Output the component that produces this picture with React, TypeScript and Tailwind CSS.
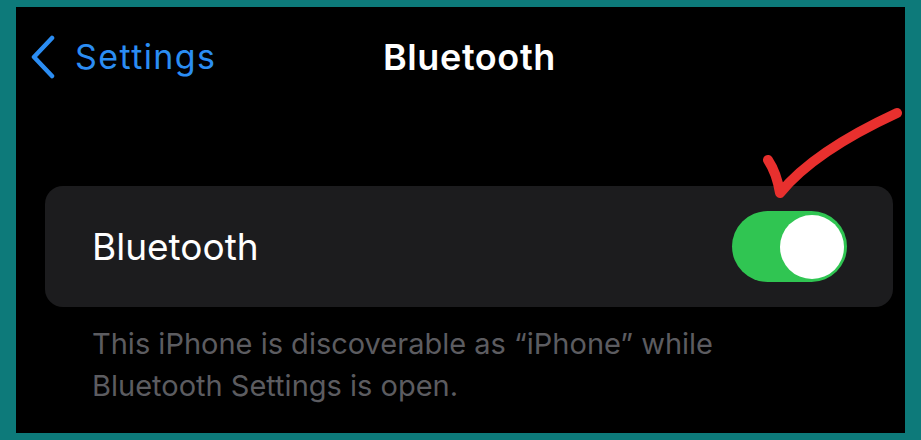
export default function App() {
  return (
    <div className="w-[921px] h-[440px] bg-[#0d7a7a] px-[16px] py-[7px] [font-family:Inter,'Liberation_Sans',sans-serif]">
      <div className="relative h-full bg-black flex flex-col">
        <header className="h-[100px] flex items-center pl-[14px]">
          <div className="w-[353px] flex items-center gap-[19px] text-[#2b8df3]">
            <svg width="26" height="44" viewBox="0 0 26 44" fill="none">
              <polyline points="22,3 4,22 22,41" stroke="currentColor" strokeWidth="4.5" strokeLinecap="round" strokeLinejoin="round" />
            </svg>
            <span className="text-[34px] leading-none tracking-[1.4px]">Settings</span>
          </div>
          <h1 className="text-[36px] leading-none font-semibold tracking-[0.6px] text-white">Bluetooth</h1>
        </header>

        <div className="mt-[79px] ml-[29px] mr-[12px] h-[121px] rounded-[18px] bg-[#1c1c1e] flex items-center justify-between pl-[47px] pr-[46px]">
          <span className="text-[37px] leading-none text-white">Bluetooth</span>
          <div className="w-[115px] h-[71px] rounded-full bg-[#30c552] flex items-center justify-end pr-[3px]">
            <div className="w-[64px] h-[64px] rounded-full bg-white" />
          </div>
        </div>

        <p className="mt-[16px] ml-[76px] text-[29px] leading-[42px] text-[#5c5c60]">
          This iPhone is discoverable as “iPhone” while
          <br />
          Bluetooth Settings is open.
        </p>

        <svg className="absolute left-[740px] top-[98px]" width="170" height="110" viewBox="0 0 170 110" fill="none">
          <path d="M12 55 C18 64 22 76 24 88 C42 66 76 38 141 8" stroke="#e8302e" strokeWidth="10" strokeLinecap="round" strokeLinejoin="round" />
        </svg>
      </div>
    </div>
  )
}
